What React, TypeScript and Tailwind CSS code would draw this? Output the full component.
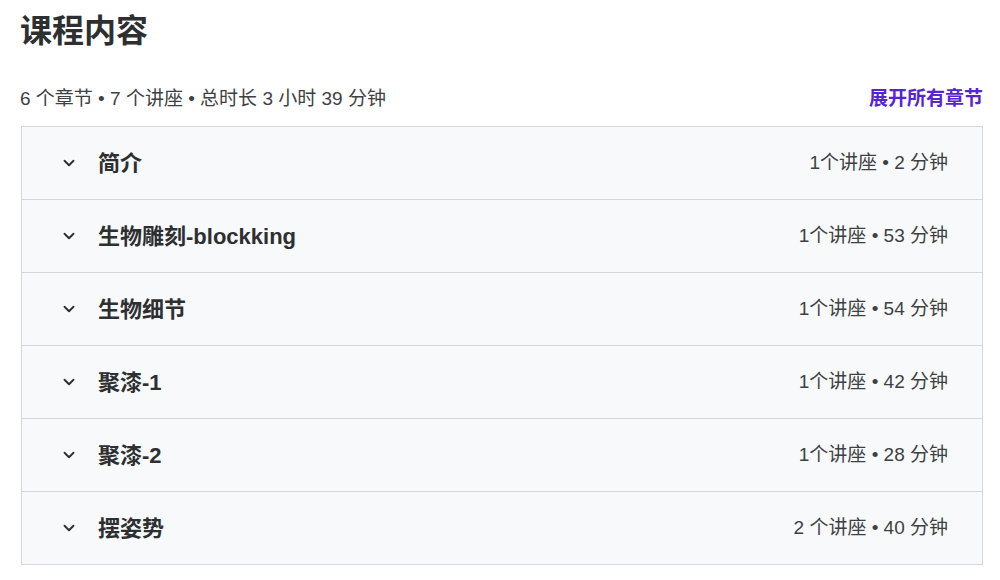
import { ChevronDown } from "lucide-react"

interface Section {
	title: string
	meta: string
}

const sections: Section[] = [
	{ title: "简介", meta: "1个讲座 • 2 分钟" },
	{ title: "生物雕刻-blockking", meta: "1个讲座 • 53 分钟" },
	{ title: "生物细节", meta: "1个讲座 • 54 分钟" },
	{ title: "聚漆-1", meta: "1个讲座 • 42 分钟" },
	{ title: "聚漆-2", meta: "1个讲座 • 28 分钟" },
	{ title: "摆姿势", meta: "2 个讲座 • 40 分钟" },
]

const font = "font-['Liberation_Sans','Noto_Sans_CJK_SC',sans-serif]"

export default function App() {
	return (
		<div className={`w-[1000px] h-[580px] bg-white text-[#2d2f31] ${font}`}>
			<div className="pl-5 pr-[17px] pt-[12px]">
				<h2 className="text-[32px] leading-[38px] font-bold">课程内容</h2>
				<div className="flex items-end justify-between mt-[36px] mb-[14px]">
					<span className="text-[19px] leading-[26px] text-[#3e4143]">6 个章节 • 7 个讲座 • 总时长 3 小时 39 分钟</span>
					<button className="text-[19px] leading-[26px] font-bold text-[#5624d0]">展开所有章节</button>
				</div>
				<div className="border border-[#d1d7dc] ml-px">
					{sections.map((s, i) => (
						<div
							key={s.title}
							className={`flex items-center justify-between bg-[#f7f9fa] pl-[38px] pr-[34px] ${i > 0 ? "h-[73px] border-t border-[#d1d7dc]" : "h-[72px]"}`}
						>
							<div className="flex items-center gap-[20px]">
								<ChevronDown size={18} strokeWidth={2.5} className="text-[#2d2f31]" />
								<span className="text-[22px] font-bold">{s.title}</span>
							</div>
							<span className="text-[19px] text-[#3e4143]">{s.meta}</span>
						</div>
					))}
				</div>
			</div>
		</div>
	)
}
